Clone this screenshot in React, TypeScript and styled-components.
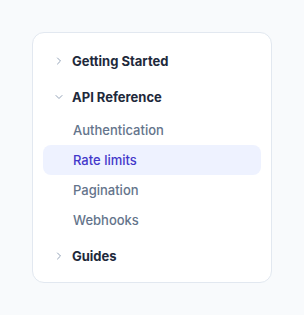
import React, { useState } from "react";
import styled, { createGlobalStyle } from "styled-components";

const Global = createGlobalStyle`
  * { box-sizing: border-box; }
  html, body { margin: 0; padding: 0; background: #f8fafc; }
  body { font-family: Inter, "Noto Sans", sans-serif; -webkit-font-smoothing: antialiased; }
`;

const Page = styled.div`
  padding: 32px;
`;

const Card = styled.nav`
  width: 240px;
  background: #ffffff;
  border: 1px solid #e2e8f0;
  border-radius: 12px;
  padding: 10px 10px 8px;
  display: flex;
  flex-direction: column;
`;

const Header = styled.button`
  all: unset;
  height: 36px;
  display: flex;
  align-items: center;
  gap: 7px;
  padding-left: 10px;
  font-family: Inter, "Noto Sans", sans-serif;
  font-size: 13px;
  font-weight: 700;
  color: #1e293b;
  cursor: pointer;
`;

const Chevron = styled.svg<{ $open: boolean }>`
  width: 12px;
  height: 12px;
  flex: none;
  color: #94a3b8;
  transform: rotate(${(p) => (p.$open ? 90 : 0)}deg);
`;

const SubList = styled.ul`
  list-style: none;
  margin: 0 0 3px;
  padding: 0;
  display: flex;
  flex-direction: column;
`;

const SubItem = styled.li<{ $active?: boolean }>`
  height: 30px;
  display: flex;
  align-items: center;
  padding-left: 30px;
  border-radius: 8px;
  font-size: 13px;
  font-weight: 500;
  color: ${(p) => (p.$active ? "#4338ca" : "#64748b")};
  background: ${(p) => (p.$active ? "#eef2ff" : "transparent")};
`;

type Section = { title: string; items: string[] };

const sections: Section[] = [
  { title: "Getting Started", items: ["Introduction", "Quickstart"] },
  { title: "API Reference", items: ["Authentication", "Rate limits", "Pagination", "Webhooks"] },
  { title: "Guides", items: ["Testing", "Deployment"] },
];

const Icon = ({ open }: { open: boolean }) => (
  <Chevron $open={open} viewBox="0 0 24 24" fill="none" stroke="currentColor" strokeWidth={2} strokeLinecap="round" strokeLinejoin="round">
    <path d="m9 18 6-6-6-6" />
  </Chevron>
);

export default function App() {
  const [open, setOpen] = useState<string>("API Reference");
  return (
    <Page>
      <Global />
      <Card>
        {sections.map((s) => (
          <React.Fragment key={s.title}>
            <Header onClick={() => setOpen(open === s.title ? "" : s.title)}>
              <Icon open={open === s.title} />
              {s.title}
            </Header>
            {open === s.title && (
              <SubList>
                {s.items.map((it) => (
                  <SubItem key={it} $active={it === "Rate limits"}>
                    {it}
                  </SubItem>
                ))}
              </SubList>
            )}
          </React.Fragment>
        ))}
      </Card>
    </Page>
  );
}
